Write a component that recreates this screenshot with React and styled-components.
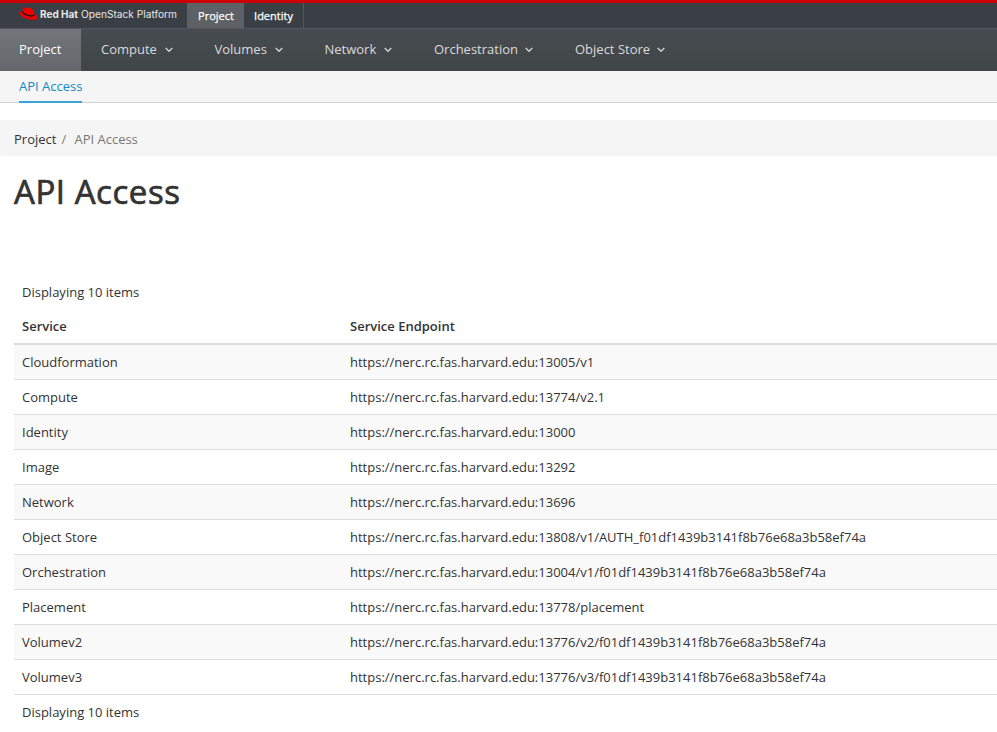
import React from "react";
import styled, { createGlobalStyle } from "styled-components";

const Global = createGlobalStyle`
  *, *::before, *::after { box-sizing: border-box; }
  body {
    margin: 0;
    background: #fff;
    color: #333;
    font: 400 13px/20px "Open Sans", "Noto Sans", sans-serif;
    overflow: hidden;
  }
`;

const Header = styled.header`
  border-top: 3px solid #cc0000;
  background: #393f45;
`;
const TopBar = styled.div`
  display: flex;
  height: 26px;
  border-bottom: 1px solid #53565b;
`;
const Brand = styled.a`
  display: flex;
  width: 187px;
  height: 25px;
  padding: 4px 0 0 19px;
`;
const Hat = styled.svg`
  width: 19px;
  height: 14px;
`;
const BrandName = styled.svg`
  width: 140px;
  height: 18px;
  margin-left: 2px;
  fill: #e6e7e8;
  font-family: "Inter", sans-serif;
  font-size: 10px;
`;
const TopLink = styled.a`
  display: flex;
  align-items: center;
  justify-content: center;
  width: ${(p) => p.$w}px;
  height: 25px;
  padding-left: ${(p) => (p.$active ? 1 : 0)}px;
  color: #fff;
  font-size: 11px;
  -webkit-text-stroke: 0.25px #fff;
  background: ${(p) => (p.$active ? "#5d6165" : "transparent")};
  border-right: ${(p) => (p.$active ? "0" : "1px solid #53565b")};
`;
const MainNav = styled.nav`
  display: flex;
  height: 42px;
  background: linear-gradient(#474c50, #404548);
`;
const NavItem = styled.a`
  display: flex;
  align-items: center;
  height: 42px;
  width: ${(p) => p.$w}px;
  padding: 0 0 2px ${(p) => (p.$active ? 19 : 20)}px;
  color: ${(p) => (p.$active ? "#fff" : "#dbdada")};
  background: ${(p) => (p.$active ? "linear-gradient(#72757a, #64686c)" : "none")};
`;
const ChevronIcon = styled.svg`
  width: 8px;
  height: 6px;
  margin: 2px 22px 0 auto;
  fill: none;
  stroke: #d1d1d1;
  stroke-width: 1.4;
`;
const SubNav = styled.div`
  height: 32px;
  padding-left: 19px;
  background: #f5f5f5;
  border-bottom: 1px solid #d1d1d1;
`;
const SubLink = styled.a`
  display: inline-block;
  height: 32px;
  padding-top: 5px;
  color: #0f8bc5;
  border-bottom: 2px solid #39a5dc;
`;
const Crumbs = styled.div`
  display: flex;
  align-items: center;
  height: 36px;
  margin-top: 17px;
  padding: 2px 0 0 14px;
  background: #f5f5f5;
  border-radius: 3px 0 0 3px;
`;
const Crumb = styled.span`
  color: ${(p) => (p.$muted ? "#777" : "#333")};
`;
const Slash = styled.span`
  width: 18px;
  padding-left: 5px;
  color: #777;
`;
const Title = styled.h1`
  margin: 16px 0 0 14px;
  font-size: 33px;
  font-weight: 400;
  line-height: 40px;
  letter-spacing: 0.55px;
  -webkit-text-stroke: 0.7px #333;
`;
const Content = styled.main`
  margin: 63px 0 0 14px;
`;
const Count = styled.div`
  height: ${(p) => (p.$footer ? 35 : 34)}px;
  padding: 7px 8px;
`;
const Row = styled.div`
  display: grid;
  grid-template-columns: 328px 1fr;
  height: 35px;
  padding: 7px 0 0 8px;
  border-bottom: 1px solid #dddddd;
  background: ${(p) => (p.$striped ? "#f9f9f9" : "#fff")};
`;
const HeadRow = styled(Row)`
  height: 36px;
  border-bottom-width: 2px;
  font-weight: 600;
`;

const NAV = [
  ["Compute", 113.5],
  ["Volumes", 110],
  ["Network", 109.5],
  ["Orchestration", 141],
  ["Object Store", 132],
];
const HOST = "https://nerc.rc.fas.harvard.edu:";
const ID = "f01df1439b3141f8b76e68a3b58ef74a";
const SERVICES = [
  ["Cloudformation", "13005/v1"],
  ["Compute", "13774/v2.1"],
  ["Identity", "13000"],
  ["Image", "13292"],
  ["Network", "13696"],
  ["Object Store", `13808/v1/AUTH_${ID}`],
  ["Orchestration", `13004/v1/${ID}`],
  ["Placement", "13778/placement"],
  ["Volumev2", `13776/v2/${ID}`],
  ["Volumev3", `13776/v3/${ID}`],
];

const Chevron = () => (
  <ChevronIcon viewBox="0 0 8 6">
    <path d="M.7 1 4 4.3 7.3 1" />
  </ChevronIcon>
);

export default function App() {
  return (
    <>
      <Global />
      <Header>
        <TopBar>
          <Brand>
            <Hat viewBox="0 0 19 14">
              <path fill="#e00" d="M4.2 1.500C4.600.4 5.600.1 7 .6l1.700.4c1.200-.3 3-.2 4.200.8 1.300 1 1.800 3 2.100 4.900 2.200.6 3.500 2 3.300 3.600-.4 2.300-3.400 2.900-6.400 2.400C7 12.100 1.200 9.200.6 6.500.4 5 1.800 4.300 3.500 4.300z" />
              <path fill="none" stroke="#15181b" strokeWidth="1.4" d="M3.400 4.600c.6 2.200 4.500 4 7.700 4.300 2.200.2 3.700-.2 4-1.500" />
            </Hat>
            <BrandName>
              <text x="0" y="11" fontWeight="700" textLength="38" lengthAdjust="spacingAndGlyphs">Red Hat</text>
              <text x="41" y="11" textLength="96" lengthAdjust="spacingAndGlyphs">OpenStack Platform</text>
            </BrandName>
          </Brand>
          <TopLink $w={57} $active>Project</TopLink>
          <TopLink $w={60}>Identity</TopLink>
        </TopBar>
        <MainNav>
          <NavItem $w={81} $active>Project</NavItem>
          {NAV.map(([label, w]) => (
            <NavItem key={label} $w={w}>{label}<Chevron /></NavItem>
          ))}
        </MainNav>
      </Header>
      <SubNav><SubLink>API Access</SubLink></SubNav>
      <Crumbs>
        <Crumb>Project</Crumb>
        <Slash>/</Slash>
        <Crumb $muted>API Access</Crumb>
      </Crumbs>
      <Title>API Access</Title>
      <Content>
        <Count>Displaying 10 items</Count>
        <HeadRow><span>Service</span><span>Service Endpoint</span></HeadRow>
        {SERVICES.map(([name, path], i) => (
          <Row key={name} $striped={i % 2 === 0}>
            <span>{name}</span>
            <span>{HOST + path}</span>
          </Row>
        ))}
        <Count $footer>Displaying 10 items</Count>
      </Content>
    </>
  );
}
